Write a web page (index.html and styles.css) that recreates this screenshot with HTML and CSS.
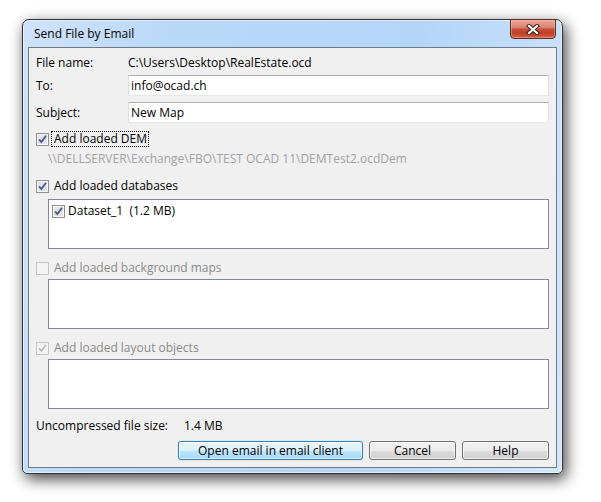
FILE: index.html
```html
<!DOCTYPE html>
<html>
<head>
<meta charset="utf-8">
<link rel="stylesheet" href="styles.css">
</head>
<body>
<div class="window">
  <div class="titlebar">Send File by Email</div>
  <div class="closebtn">
    <svg width="14" height="11" viewBox="0 0 14 11">
      <path d="M3 2 L11 9 M11 2 L3 9" stroke="#3b1f1a" stroke-width="4.2" stroke-linecap="square" fill="none"/>
      <path d="M3 2 L11 9 M11 2 L3 9" stroke="#ffffff" stroke-width="2.2" stroke-linecap="square" fill="none"/>
    </svg>
  </div>
  <div class="client">
    <div class="row">
      <span class="label">File name:</span>
      <span class="value">C:\Users\Desktop\RealEstate.ocd</span>
    </div>
    <div class="row field first">
      <span class="label">To:</span>
      <div class="input">info@ocad.ch</div>
    </div>
    <div class="row field second">
      <span class="label">Subject:</span>
      <div class="input">New Map</div>
    </div>
    <div class="cbrow dem">
      <svg class="cb" width="13" height="13" viewBox="0 0 13 13">
        <rect x="0.5" y="0.5" width="12" height="12" fill="#f2f2f2" stroke="#8e8f8f"/>
        <rect x="1.5" y="1.5" width="10" height="10" fill="#e3e3e6" stroke="#f7f7f7"/>
        <path d="M3 6.3 L5.4 9 L10 2.8" stroke="#4a5d8c" stroke-width="1.9" fill="none"/>
      </svg>
      <span class="cblabel focus">Add loaded DEM</span>
    </div>
    <div class="path">\\DELLSERVER\Exchange\FBO\TEST OCAD 11\DEMTest2.ocdDem</div>
    <div class="cbrow">
      <svg class="cb" width="13" height="13" viewBox="0 0 13 13">
        <rect x="0.5" y="0.5" width="12" height="12" fill="#f2f2f2" stroke="#8e8f8f"/>
        <rect x="1.5" y="1.5" width="10" height="10" fill="#e3e3e6" stroke="#f7f7f7"/>
        <path d="M3 6.3 L5.4 9 L10 2.8" stroke="#4a5d8c" stroke-width="1.9" fill="none"/>
      </svg>
      <span class="cblabel">Add loaded databases</span>
    </div>
    <div class="list first">
      <div class="item">
        <svg class="cb" width="13" height="13" viewBox="0 0 13 13">
          <rect x="0.5" y="0.5" width="12" height="12" fill="#f2f2f2" stroke="#8e8f8f"/>
          <rect x="1.5" y="1.5" width="10" height="10" fill="#e3e3e6" stroke="#f7f7f7"/>
          <path d="M3 6.3 L5.4 9 L10 2.8" stroke="#4a5d8c" stroke-width="1.9" fill="none"/>
        </svg>
        <span class="itemlabel">Dataset_1&nbsp;&nbsp;(1.2 MB)</span>
      </div>
    </div>
    <div class="cbrow">
      <svg class="cb" width="13" height="13" viewBox="0 0 13 13">
        <rect x="0.5" y="0.5" width="12" height="12" fill="#f4f4f4" stroke="#c4c4c4"/>
      </svg>
      <span class="cblabel disabled">Add loaded background maps</span>
    </div>
    <div class="list"></div>
    <div class="cbrow">
      <svg class="cb" width="13" height="13" viewBox="0 0 13 13">
        <rect x="0.5" y="0.5" width="12" height="12" fill="#f4f4f4" stroke="#c4c4c4"/>
        <path d="M3 6.3 L5.4 9 L10 2.8" stroke="#b8b8b8" stroke-width="1.6" fill="none"/>
      </svg>
      <span class="cblabel disabled">Add loaded layout objects</span>
    </div>
    <div class="list"></div>
    <div class="row size">
      <span class="sizelabel">Uncompressed file size:</span>
      <span class="value">1.4 MB</span>
    </div>
    <div class="buttons">
      <div class="btn default">Open email in email client</div>
      <div class="btn">Cancel</div>
      <div class="btn">Help</div>
    </div>
  </div>
</div>
</body>
</html>
```

FILE: styles.css
```css
html, body {
  margin: 0;
  padding: 0;
  background: #ffffff;
}
body {
  width: 601px;
  height: 502px;
  overflow: hidden;
  font-family: "Segoe UI", "Open Sans", "Noto Sans", sans-serif;
  font-size: 12px;
  color: #000;
}
.window {
  position: relative;
  margin: 19px 0 0 22px;
  width: 541px;
  height: 455px;
  box-sizing: border-box;
  border: 1px solid #2f3236;
  border-radius: 7px 7px 5px 5px;
  background: linear-gradient(100deg, #cfe3f8 0%, #bad8f8 25%, #b5d5f8 65%, #d3e7fb 100%);
  box-shadow: 3px 5px 15px rgba(0, 0, 0, 0.75), inset 0 0 0 1px rgba(255, 255, 255, 0.55);
  padding: 0 5px 5px 5px;
  display: flex;
  flex-direction: column;
}
.titlebar {
  height: 27px;
  line-height: 27px;
  padding-left: 6px;
  flex: none;
}
.closebtn {
  position: absolute;
  top: -1px;
  right: 6px;
  width: 46px;
  height: 20px;
  box-sizing: border-box;
  border: 1px solid #5e2a22;
  border-radius: 0 0 4px 4px;
  background: linear-gradient(#eaa596 0%, #db8472 40%, #c54e39 52%, #c03e27 72%, #d26549 100%);
  box-shadow: inset 0 0 0 1px rgba(255, 220, 210, 0.35);
  display: flex;
  align-items: center;
  justify-content: center;
}
.client {
  flex: 1;
  border: 1px solid #6d7a89;
  background: #f0f0f0;
  padding: 7px 7px 0 7px;
  display: flex;
  flex-direction: column;
}
.row {
  display: flex;
  align-items: center;
  height: 16px;
  line-height: 16px;
  white-space: nowrap;
}
.label {
  width: 92px;
  flex: none;
}
.row.field {
  height: 21px;
}
.row.field.first {
  margin-top: 4px;
}
.row.field.second {
  margin-top: 6px;
}
.input {
  flex: 1;
  height: 21px;
  box-sizing: border-box;
  background: #fff;
  border: 1px solid #dbdfe6;
  border-top-color: #abadb3;
  border-bottom-color: #e3e9ef;
  padding-left: 2px;
  line-height: 19px;
}
.cbrow {
  display: flex;
  align-items: center;
  height: 16px;
  line-height: 16px;
  margin-top: 11px;
  white-space: nowrap;
}
.cbrow.dem {
  margin-top: 8px;
}
.cb {
  flex: none;
  display: block;
}
.cblabel {
  margin-left: 2px;
  padding: 0 1px 0 2px;
  line-height: 14px;
  border: 1px solid transparent;
}
.cblabel.focus {
  border: 1px dotted #000;
}
.cblabel.disabled {
  color: #8a8a8a;
}
.path {
  margin-top: 4px;
  height: 16px;
  line-height: 16px;
  padding-left: 12px;
  color: #a2a2a2;
  white-space: nowrap;
}
.list {
  margin: 3px 0 0 12px;
  height: 50px;
  box-sizing: border-box;
  background: #fff;
  border: 1px solid #828790;
}
.list.first {
  margin-top: 5px;
}
.item {
  display: flex;
  align-items: center;
  height: 16px;
  padding: 3px 0 0 3px;
}
.itemlabel {
  margin-left: 3px;
  line-height: 16px;
  white-space: pre;
}
.row.size {
  margin-top: 9px;
}
.sizelabel {
  width: 148px;
  flex: none;
}
.buttons {
  margin-top: 7px;
  display: flex;
  justify-content: flex-end;
  gap: 6px;
}
.btn {
  width: 87px;
  height: 19px;
  box-sizing: border-box;
  border: 1px solid #707070;
  border-radius: 3px;
  background: linear-gradient(#f2f2f2 0%, #ebebeb 50%, #dddddd 51%, #cfcfcf 100%);
  box-shadow: inset 0 0 0 1px rgba(255, 255, 255, 0.7);
  text-align: center;
  line-height: 17px;
}
.btn.default {
  width: 185px;
  border-color: #3c7fb1;
  background: linear-gradient(#eaf6fd 0%, #d9f0fc 50%, #bee6fd 51%, #a7d9f5 100%);
  box-shadow: inset 0 0 0 1px rgba(255, 255, 255, 0.6), 0 0 1px #48a0e0;
}
```
